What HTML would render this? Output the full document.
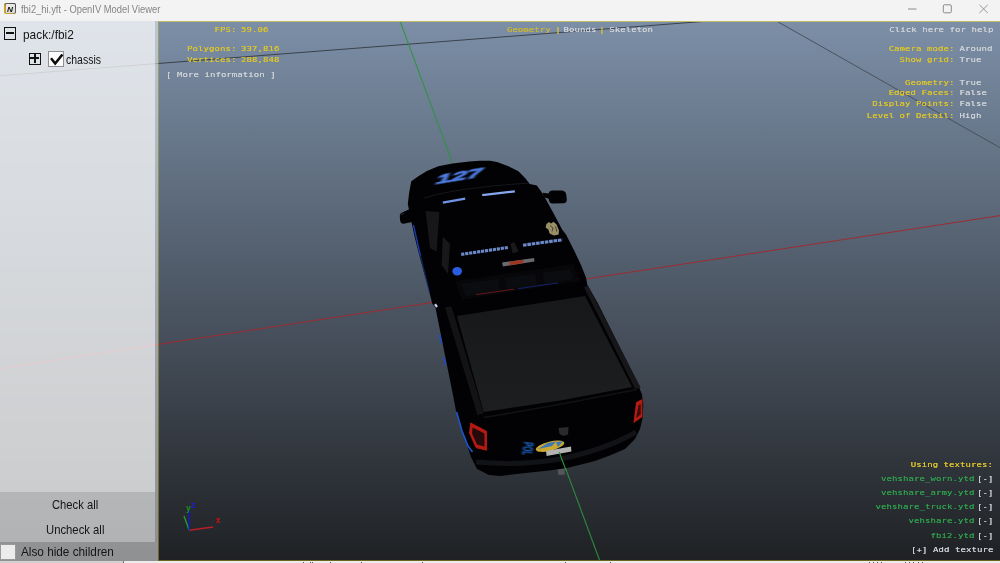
<!DOCTYPE html>
<html lang="en">
<head>
<meta charset="utf-8">
<title>fbi2_hi.yft - OpenIV Model Viewer</title>
<style>
*{box-sizing:border-box;margin:0;padding:0}
html,body{width:1000px;height:563px;overflow:hidden;background:#e9e9e9}
body{position:relative;font-family:"Liberation Sans",sans-serif;color:#1a1a1a}
.abs{position:absolute}
#titlebar{left:0;top:0;width:1000px;height:21px;background:#f3f3f3}
#title{left:21.3px;top:3.3px;font-size:10.7px;line-height:13px;color:#858585;white-space:nowrap;transform-origin:0 50%;transform:scaleX(.876)}
#scene{left:0;top:21px;width:1000px;height:540px;background:linear-gradient(180deg,#7c8fa7 0%,#1f2124 100%);overflow:hidden}
#scene svg{position:absolute;left:0;top:-21px}
#vpborder{left:158px;top:21px;width:843px;height:540px;border:1px solid rgba(200,182,30,.45);border-top-color:#c3ba66;border-right:none;pointer-events:none}
#left{left:0;top:21px;width:155px;height:471px;background:rgba(255,255,255,.76)}
#split{left:155px;top:21px;width:3px;height:521px;background:rgba(255,255,255,.49)}
#btns{left:0;top:492px;width:155px;height:50px;background:rgba(255,255,255,.65)}
#hide{left:0;top:542px;width:158px;height:19px;background:rgba(255,255,255,.50)}
#bottomstrip{left:0;top:561px;width:1000px;height:2px;background:#ececec}
#bottomstrip b{position:absolute;left:0;top:0;width:124px;height:2px;background:#d2d2d2;border-right:1px solid #777}
#bottomstrip i{position:absolute;top:1px;width:1.4px;height:1px;background:#555}
.ui{font-size:12.7px;line-height:15px;white-space:nowrap;color:#151515;transform-origin:0 50%}
.mono{font-family:"DejaVu Sans Mono","Liberation Mono",monospace;font-size:9px;line-height:13.253px;white-space:pre;letter-spacing:.07px;transform:scaleY(.83);transform-origin:0 0;text-shadow:0 0 .4px currentColor}
.y{color:#dcc42a}
.w{color:#cfd3d8}
.g{color:#2f9e4c}
.r{text-align:right}
</style>
</head>
<body>
<div id="scene" class="abs">
<svg width="1000" height="563" viewBox="0 0 1000 563">
  <!-- grid lines -->
  <line x1="0" y1="75.7" x2="709" y2="21" stroke="#31353d" stroke-width="1" opacity=".85"/>
  <line x1="776.5" y1="21" x2="1000" y2="147.7" stroke="#474c56" stroke-width="1" opacity=".9"/>
  <line x1="0" y1="368.6" x2="1000" y2="215.6" stroke="#a2282f" stroke-width="1" opacity=".95"/>
  <line x1="400" y1="21" x2="599.5" y2="560" stroke="#2c9440" stroke-width="1.1" opacity=".92"/>
  <g id="truck">
  <defs>
    <filter id="b1" x="-20%" y="-20%" width="140%" height="140%"><feGaussianBlur stdDeviation="0.6"/></filter>
    <filter id="b2" x="-20%" y="-20%" width="140%" height="140%"><feGaussianBlur stdDeviation="1.1"/></filter>
    <linearGradient id="cov" x1="0" y1="0" x2="0" y2="1"><stop offset="0" stop-color="#17181a"/><stop offset="1" stop-color="#1d1e20"/></linearGradient>
  </defs>
  <!-- body silhouette -->
  <path id="body" fill="#020204" d="M426.9 171 L438.3 166.3 L452.5 163.5 L469.5 161.6 L480 160.7 L490 160.7 L497 162 L508.4 166.3 L518.4 171.3 L525.5 178.4 L529.7 184 L536.8 185.5 L541 191.2 L546.8 201 L553.9 214 L562.4 230 L566 234.5 L575 252.3 L581 265 L586 277.4 L587.4 285 L597.3 302.3 L609.8 327.2 L624.7 357 L637 382 L642 394.4 L643.3 405 L642.6 418 L640 429 L635 439 L625 449 L611 455 L595 461 L583 464 L567 468 L549 470.4 L535 472 L521 473.4 L501 476 L489 475 L477 469 L471 457 L467 445 L461 429 L456 411 L453.3 396.6 L442.6 343.3 L435.5 307.8 L432.3 303.8 L428.7 289.6 L424.3 273.6 L419 254 L414.5 236.3 L411.9 223.9 L407.8 204 L409.2 192.6 L411.3 181.3 L418.4 176.3 Z"/>
  <!-- mirrors -->
  <path fill="#020204" d="M402.2 212.4 Q399.6 213.4 399.8 216.5 L400.2 221 Q400.8 224.2 403.6 223.8 L412 222 L417 218 L416.4 211 L409.4 209.2 Z"/>
  <path d="M401.4 215.2 Q402 213.6 404 213.2" stroke="#3a3d44" stroke-width=".8" fill="none"/>
  <path fill="#020204" d="M542.5 192.8 L548.6 193.6 Q549 191 551.6 190.5 L562 190.6 Q565.6 191 566.2 194.5 L566.8 199.5 Q566.8 203 563.5 203.2 L552.5 203.6 Q549.6 203.4 549 200.6 L548.7 198.7 L544 197.2 Z"/>
  <!-- bed rail + cover -->
  <path fill="#131315" d="M445 307.2 L451.5 306.4 L483.6 413.4 L477.4 415 Z"/>
  <path fill="#17171a" d="M584 287.2 L588 285.6 L640.6 387.4 L635.2 389 Z"/>
  <path fill="url(#cov)" d="M457 316 L585 296 L632 387 L560 400.6 L483.7 412 Z"/>
  <!-- cab details -->
  <path fill="#17171a" d="M425.6 211 L439.4 212 L436.6 251.4 L430 248 Z"/>
  <path fill="#18181b" d="M442.8 236.5 L450 244 L448 273.8 L441.6 265.3 Z"/>
  <path fill="#070709" d="M455 281 L573 264 L580 281 L462 300 Z"/>
  <path fill="#121318" d="M461 284 L498 279 L500 290 L466 296 Z M505 278 L535 274 L537 285 L507 289 Z M542 273 L570 269 L574 279 L545 284 Z" opacity=".45"/>
  <!-- hood number -->
  <text transform="matrix(2.2 -0.36 -0.5 1.08 434.6 184.2)" font-family="'Liberation Sans',sans-serif" font-weight="bold" font-size="12.5" fill="#4d7be0" stroke="#4d7be0" stroke-width="0.8" filter="url(#b1)">127</text>
  <!-- lightbar streaks -->
  <path d="M442.8 202.6 L465.2 198.6" stroke="#6f93e6" stroke-width="2.2" filter="url(#b1)"/>
  <path d="M482.2 195.2 L514.8 191.4" stroke="#86a6ee" stroke-width="2.2" filter="url(#b1)"/>
  <path d="M446 168 Q470 164 500 166" stroke="#000" stroke-width="0"/>
  <!-- hood/windshield separation faint line -->
  <path d="M424 198 Q455 188 529 183" stroke="#16171c" stroke-width="1" fill="none"/>
  <!-- roof text streaks -->
  <path d="M461.2 254.4 L508.6 247.4" stroke="#7797de" stroke-width="3.1" stroke-dasharray="3.2 0.8" filter="url(#b1)" opacity=".9"/>
  <path d="M523 245.2 L562.4 239.8" stroke="#7797de" stroke-width="3.1" stroke-dasharray="3.6 0.8" filter="url(#b1)" opacity=".9"/>
  <path d="M510.6 243.6 L514.4 242 L518.6 251.6 L512.6 253.6 Z" fill="#19191c"/>
  <!-- badge -->
  <path d="M546.4 224 L549 222 L551 223.4 L553.6 221.8 L556.6 224.4 L559 230.6 L558.6 234.6 L554 235.6 L549.6 233.6 L548.4 229.6 L545.6 227.6 Z" fill="#9a8e66" filter="url(#b1)"/>
  <path d="M550 225.5 L553 228 L552 231.5 M555.6 226.4 L556.8 231.6" stroke="#4c4636" stroke-width="1" fill="none" filter="url(#b1)"/>
  <!-- third brake light -->
  <path d="M502 262.5 L534 258 L534.5 261.5 L503 266.5 Z" fill="#6b6b6e" filter="url(#b1)"/>
  <path d="M509.5 261.8 L523 259.8 L523.6 263 L510 265.2 Z" fill="#a03420" filter="url(#b1)"/>
  <!-- blue side lamp + highlights -->
  <ellipse cx="457.2" cy="271.2" rx="4.8" ry="4.2" fill="#2b5be0" filter="url(#b1)"/>
  <path d="M413.4 225 L420.5 256" stroke="#1a3aa8" stroke-width="1.4" filter="url(#b1)"/>
  <path d="M420.5 256 L429.6 293" stroke="#16307f" stroke-width="1.1" filter="url(#b1)" opacity=".8"/>
  <path d="M435 304.2 L437 307" stroke="#c8d2f0" stroke-width="2.2" filter="url(#b1)"/>
  <path d="M439.4 334.6 L441.6 343.4" stroke="#1c4cc8" stroke-width="1.6" filter="url(#b1)"/>
  <path d="M443.4 357 L445.8 365.2" stroke="#1c4cc8" stroke-width="1.5" filter="url(#b1)"/>
  <path d="M456.6 412 L462 431 L468 446 L472.5 452" stroke="#1d55cc" stroke-width="1.6" fill="none" filter="url(#b1)"/>
  <!-- rear dashed red/blue line -->
  <path d="M476 294.6 L514 289.2" stroke="#651a20" stroke-width="1"/>
  <path d="M518 288.7 L558 282.8" stroke="#15226c" stroke-width="1"/>
  <!-- tail lights -->
  <path d="M470.6 423 L486.4 431.2 L486.6 450.2 L476 447.6 L469.6 433 Z" fill="#b21a12" stroke="#b21a12" stroke-width="1" stroke-linejoin="round"/>
  <path d="M472.6 427.6 L484.4 433.4 L484.5 446.6 L477 444.6 L472 433.5 Z" fill="#26090a"/>
  <path d="M636 402.2 L642.4 399 L642.5 417 L633.4 423.2 Z" fill="#b21a12"/>
  <path d="M638.6 405 L640.8 404 L640.6 414.6 L636.2 418 Z" fill="#3a0c0c"/>
  <!-- tailgate top highlight, bumper -->
  <path d="M484 417.5 Q560 405 637 389.5" stroke="#111215" stroke-width="1.6" fill="none"/>
  <path d="M476 462 Q520 466 560 459 Q605 450 636 432" stroke="#121316" stroke-width="5" fill="none"/>
  <!-- emblem -->
  <path d="M558.5 428 L568.5 427 L568 434.5 L563.5 436 L559.5 434 Z" fill="#2a2b2e" filter="url(#b1)"/>
  <!-- POL text, sticker, plate, hitch -->
  <text transform="translate(523.6 441.6) rotate(96) scale(1 2.2)" font-family="'Liberation Sans',sans-serif" font-size="6.4" font-weight="bold" fill="#1e6fd8" filter="url(#b1)">POL</text>
  <ellipse cx="550" cy="446.2" rx="14.6" ry="4.6" transform="rotate(-14 550 446.2)" fill="#c9a731"/>
  <path d="M538 449 L548 443 L556 441.6 L552 446 Z M556 442 L563 441.2 L558 447 Z" fill="#3b78b8"/>
  <path d="M546 451 L571 446.6 L571.4 451.4 L546.6 456 Z" fill="#b3b3b3"/>
  <path d="M557.6 469.4 L564.4 468.6 L565 474.4 L558.4 475 Z" fill="#55565a" filter="url(#b1)"/>
  <line x1="559.2" y1="452" x2="566" y2="470.4" stroke="#2f9a3e" stroke-width="1.1"/>
</g>
</svg>
</div>

<div id="left" class="abs"></div>
<div id="split" class="abs"></div>
<div id="btns" class="abs"></div>
<div id="hide" class="abs"></div>
<div id="vpborder" class="abs"></div>


<!-- viewport overlay text -->
<div class="abs mono y r" style="left:160px;top:24.8px;width:76.5px">FPS:</div>
<div class="abs mono y" style="left:241px;top:24.8px">59.06</div>
<div class="abs mono y r" style="left:160px;top:44.2px;width:76.5px">Polygons:
Vertices:</div>
<div class="abs mono y" style="left:241px;top:44.2px">337,816
288,848</div>
<div class="abs mono w" style="left:166px;top:70.3px">[ More information ]</div>

<div class="abs mono" style="left:506.9px;top:24.6px;color:#c9b535">Geometry</div>
<div class="abs mono y" style="left:555.2px;top:24.6px">|</div>
<div class="abs mono w" style="left:563.5px;top:24.6px">Bounds</div>
<div class="abs mono y" style="left:599.3px;top:24.6px">|</div>
<div class="abs mono w" style="left:609.2px;top:24.6px">Skeleton</div>

<div class="abs mono w r" style="left:860px;top:24.8px;width:133.5px">Click here for help</div>
<div class="abs mono y r" style="left:820px;top:44.2px;width:134.5px">Camera mode:
Show grid:

Geometry:
Edged Faces:
Display Points:
Level of Detail:</div>
<div class="abs mono w" style="left:959.5px;top:44.2px">Around
True

True
False
False
High</div>

<div class="abs mono y r" style="left:860px;top:460.2px;width:133px">Using textures:</div>
<div class="abs mono r" style="left:820px;top:472px;width:173.4px;line-height:16.928px"><span class="g">vehshare_worn.ytd</span><span class="w"><span style="letter-spacing:-2.9px"> </span>[-]</span>
<span class="g">vehshare_army.ytd</span><span class="w"><span style="letter-spacing:-2.9px"> </span>[-]</span>
<span class="g">vehshare_truck.ytd</span><span class="w"><span style="letter-spacing:-2.9px"> </span>[-]</span>
<span class="g">vehshare.ytd</span><span class="w"><span style="letter-spacing:-2.9px"> </span>[-]</span>
<span class="g">fbi2.ytd</span><span class="w"><span style="letter-spacing:-2.9px"> </span>[-]</span>
<span class="w">[+] Add texture</span></div>

<!-- left tree -->
<div class="abs" style="left:4.2px;top:27.4px;width:12.2px;height:12.2px;border:1.5px solid #111"><div class="abs" style="left:.8px;top:3.9px;width:7.6px;height:1.5px;background:#111"></div></div>
<div id="t1" class="abs ui" style="left:23.4px;top:27.8px;transform:scaleX(0.9354)">pack:/fbi2</div>
<div class="abs" style="left:29.3px;top:52.6px;width:12.2px;height:12.2px;border:1.5px solid #111"><div class="abs" style="left:0;top:3.9px;width:9.2px;height:1.4px;background:#111"></div><div class="abs" style="left:3.9px;top:0;width:1.4px;height:9.2px;background:#111"></div></div>
<div class="abs" style="left:48px;top:51px;width:16px;height:16px;border:1px solid #8c8f94;background:#fbfbfb">
<svg class="abs" style="left:-1px;top:-1px" width="16" height="16" viewBox="0 0 16 16"><path d="M3 7.3 L7.2 12.6 L14.4 3.4" fill="none" stroke="#0a0a0a" stroke-width="2.5"/></svg></div>
<div id="t2" class="abs ui" style="left:66px;top:53px;transform:scaleX(0.8272)">chassis</div>

<div id="b1" class="abs ui" style="left:52.4px;top:498.2px;transform:scaleX(0.8852)">Check all</div>
<div id="b2" class="abs ui" style="left:46.2px;top:523.2px;transform:scaleX(0.8904)">Uncheck all</div>
<div class="abs" style="left:0;top:543.5px;width:15.5px;height:16px;border:1px solid #9a9a9c;background:#ececec"></div>
<div id="b3" class="abs ui" style="left:21.3px;top:545.2px;transform:scaleX(0.9275)">Also hide children</div>

<!-- axis gizmo -->
<svg class="abs" style="left:175px;top:495px" width="50" height="40" viewBox="175 495 50 40">
  <line x1="189.2" y1="530.2" x2="213.2" y2="527" stroke="#b81f26" stroke-width="1.4"/>
  <line x1="189.2" y1="530.2" x2="184" y2="516" stroke="#1f9a2a" stroke-width="1.4"/>
  <line x1="189.3" y1="530.2" x2="189.5" y2="511" stroke="#1414c8" stroke-width="1.4"/>
  <text x="215.3" y="522.8" font-family="'DejaVu Sans Mono','Liberation Mono',monospace" font-weight="bold" font-size="8" fill="#c00f18">x</text>
  <text x="185.9" y="511.4" font-family="'DejaVu Sans Mono','Liberation Mono',monospace" font-weight="bold" font-size="8" fill="#168f1e">y</text>
  <text x="191.1" y="507.8" font-family="'DejaVu Sans Mono','Liberation Mono',monospace" font-weight="bold" font-size="8" fill="#1c1cd8">z</text>
</svg>

<div id="titlebar" class="abs"></div>
<div id="title" class="abs">fbi2_hi.yft - OpenIV Model Viewer</div>

<!-- titlebar icon + window buttons -->
<div class="abs" style="left:4.4px;top:2.6px;width:11.8px;height:11.6px;border-radius:1.8px;background:linear-gradient(45deg,#caa43a 0%,#c9a136 38%,#6a6658 55%,#3c3c3c 100%)"></div>
<div class="abs" style="left:5.7px;top:3.9px;width:9.2px;height:9px;border-radius:.8px;background:linear-gradient(135deg,#f2f2f2,#d4d4d4)"></div>
<div class="abs" style="left:7px;top:4.6px;font-size:7.8px;line-height:10px;font-weight:bold;font-style:italic;color:#111;transform:scaleX(1.05);transform-origin:0 0">N</div>
<svg class="abs" style="left:900px;top:0" width="100" height="21" viewBox="900 0 100 21">
  <line x1="908" y1="9" x2="916.5" y2="9" stroke="#8a8a8a" stroke-width="1"/>
  <rect x="943.3" y="4.8" width="8" height="8" rx="1.2" fill="none" stroke="#8a8a8a" stroke-width="1"/>
  <path d="M979.4 4.8 L987.8 13 M987.8 4.8 L979.4 13" stroke="#8f8f8f" stroke-width=".9" fill="none"/>
</svg>
<div id="bottomstrip" class="abs"><b></b><i style="left:303px"></i><i style="left:310px"></i><i style="left:312px"></i><i style="left:330px"></i><i style="left:361px"></i><i style="left:422px"></i><i style="left:565px"></i><i style="left:610px"></i><i style="left:869px"></i><i style="left:873px"></i><i style="left:877px"></i><i style="left:881px"></i><i style="left:905px"></i><i style="left:909px"></i><i style="left:913px"></i><i style="left:918px"></i><i style="left:922px"></i></div>
</body>
</html>
